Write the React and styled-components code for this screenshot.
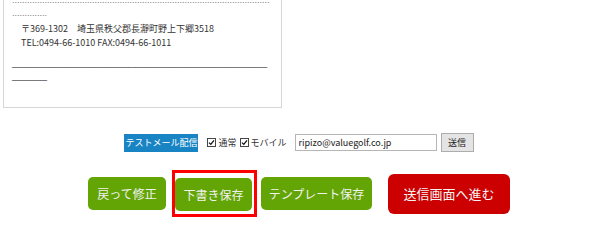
import React from 'react'
import styled, { createGlobalStyle } from 'styled-components'

const GlobalStyle = createGlobalStyle`
  body {
    margin: 0;
    background: #fff;
    color: #333;
    font-family: "Noto Sans CJK JP", "Noto Sans", sans-serif;
  }
`

const DOTS = '.'.repeat(117)
const BAR = '_'.repeat(58)

const Check = ({ label }) => (
  <CheckLabel>
    <CheckBox>
      <svg width="7" height="7" viewBox="0 0 7 7">
        <path d="M1 3.6 L2.8 5.4 L6 1.4" fill="none" stroke="#111" strokeWidth="1.3" />
      </svg>
    </CheckBox>
    {label}
  </CheckLabel>
)

const App = () => {
  return (
    <Page>
      <GlobalStyle />

      <MailBox>
        <Dots>{DOTS}</Dots>
        <Address>
          <div>〒369-1302　埼玉県秩父郡長瀞町野上下郷3518</div>
          <div>TEL:0494-66-1010 FAX:0494-66-1011</div>
        </Address>
        <Rule>{BAR}</Rule>
      </MailBox>

      <TestRow>
        <TestLabel>テストメール配信</TestLabel>
        <Check label="通常" />
        <Check label="モバイル" />
        <MailInput defaultValue="ripizo@valuegolf.co.jp" />
        <SendSmall>送信</SendSmall>
      </TestRow>

      <ButtonRow>
        <GreenButton $w={78} $mr={6}>戻って修正</GreenButton>
        <Highlight>
          <GreenButton $w={77}>下書き保存</GreenButton>
        </Highlight>
        <GreenButton $w={111} $ml={4} $mr={16}>テンプレート保存</GreenButton>
        <RedButton>送信画面へ進む</RedButton>
      </ButtonRow>
    </Page>
  )
}

export default App

const Page = styled.div`
  width: 600px;
  height: 236px;
  overflow: hidden;
`

const MailBox = styled.div`
  box-sizing: border-box;
  width: 279px;
  height: 128px;
  margin: -20px 0 0 3px;
  padding: 13px 10px 0 8px;
  border: 1px solid #d6d6d6;
`

const Dots = styled.div`
  font-family: "Liberation Sans", sans-serif;
  font-size: 9px;
  line-height: 13px;
  color: #777;
  word-break: break-all;
  line-break: anywhere;
`

const Address = styled.div`
  margin-top: 2px;
  padding-left: 9px;
  font-size: 9px;
  line-height: 14px;
  color: #333;
`

const Rule = styled.div`
  margin-top: 7px;
  font-family: "Liberation Sans", sans-serif;
  font-size: 9px;
  line-height: 13px;
  color: #333;
  word-break: break-all;
  line-break: anywhere;
`

const TestRow = styled.div`
  display: flex;
  align-items: center;
  justify-content: center;
  margin-top: 25px;
  padding-right: 2px;
  font-size: 9px;
`

const TestLabel = styled.span`
  display: inline-block;
  height: 18px;
  line-height: 18px;
  padding: 0 1px;
  margin-right: 9px;
  background: #1884c4;
  color: #fff;
  white-space: nowrap;
`

const CheckLabel = styled.label`
  display: inline-flex;
  align-items: center;
  margin-right: 3px;
  color: #333;
  white-space: nowrap;
`

const CheckBox = styled.span`
  box-sizing: border-box;
  display: inline-flex;
  align-items: center;
  justify-content: center;
  width: 9px;
  height: 9px;
  margin-right: 2px;
  border: 1px solid #444;
  background: #fff;
`

const MailInput = styled.input`
  box-sizing: border-box;
  width: 142px;
  height: 17px;
  margin-left: 5px;
  padding: 0 3px;
  border: 1px solid #b5b5b5;
  font-family: inherit;
  font-size: 9px;
  color: #222;
  outline: none;
`

const SendSmall = styled.button`
  box-sizing: border-box;
  width: 33px;
  height: 19px;
  margin-left: 4px;
  padding: 0;
  border: 1px solid #adadad;
  background: #e4e4e4;
  font-family: inherit;
  font-size: 9px;
  color: #222;
`

const ButtonRow = styled.div`
  display: flex;
  align-items: center;
  justify-content: center;
  margin-top: 18px;
  padding-right: 2px;
`

const GreenButton = styled.button`
  box-sizing: border-box;
  width: ${p => p.$w}px;
  height: 33px;
  margin: 0 ${p => p.$mr || 0}px 0 ${p => p.$ml || 0}px;
  padding: 0;
  border: none;
  border-radius: 5px;
  background: #63a505;
  color: #f2f2f2;
  font-family: inherit;
  font-size: 12px;
  white-space: nowrap;
`

const Highlight = styled.div`
  display: flex;
  padding: 5px 2px 3px 0;
  border: 3px solid #f00;
`

const RedButton = styled.button`
  box-sizing: border-box;
  width: 122px;
  height: 40px;
  padding: 0;
  border: none;
  border-radius: 6px;
  background: #cc0000;
  color: #f4f4f4;
  font-family: inherit;
  font-size: 13px;
  white-space: nowrap;
`
